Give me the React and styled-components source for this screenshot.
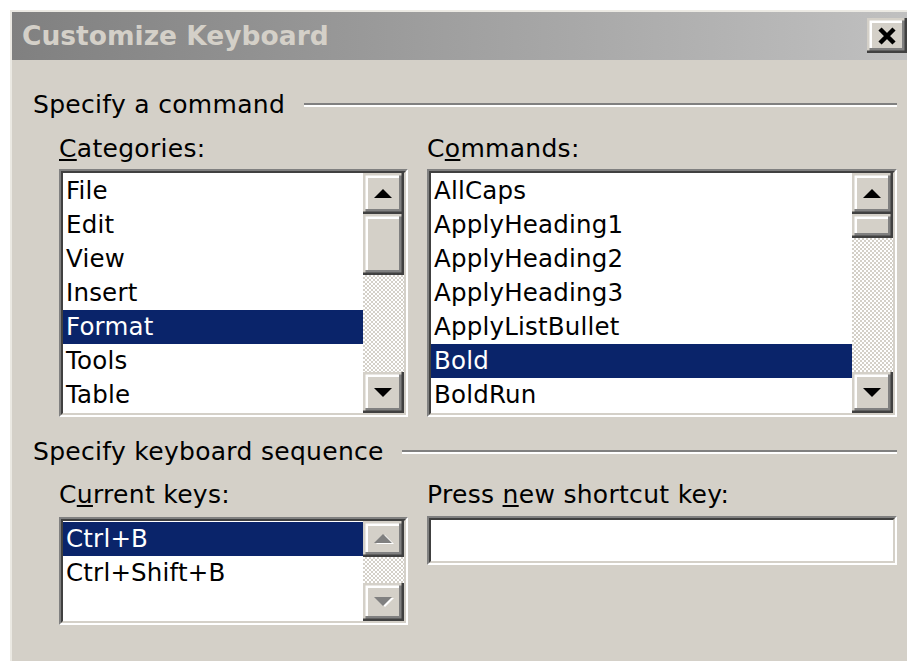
import React from 'react'
import styled, { createGlobalStyle } from 'styled-components'

const GlobalStyle = createGlobalStyle`
  html, body {
    margin: 0;
    padding: 0;
    background: #fff;
    overflow: hidden;
  }
  body {
    font-family: "DejaVu Sans", Tahoma, Verdana, sans-serif;
    color: #000;
  }
`

const face = '#d4d0c8'

// classic 3D edges, drawn as stacked inset shadows
const raised = `
  box-shadow:
    inset -2.5px -2.5px 0 #404040,
    inset 2.5px 2.5px 0 ${face},
    inset -5px -5px 0 #808080,
    inset 5px 5px 0 #fff;
`

const Dialog = styled.div`
  margin: 10px 0 0 10px;
  height: 651px;
  box-sizing: border-box;
  background: ${face};
  border-top: 2px solid #ebe9e3;
  border-left: 2px solid #ebe9e3;
`

const TitleBar = styled.div`
  display: flex;
  align-items: flex-start;
  height: 48px;
  padding-left: 10px;
  background: linear-gradient(to right, #808080, #c0c0c0);
`

const Title = styled.div`
  flex: 1;
  font-weight: bold;
  font-size: 26.5px;
  line-height: 48px;
  color: ${face};
`

const CloseButton = styled.div`
  width: 40px;
  height: 35px;
  margin-top: 6px;
  display: flex;
  align-items: center;
  justify-content: center;
  background: ${face};
  ${raised}
`

const Content = styled.div`
  width: 864px;
  padding: 30px 0 0 21px;
`

const GroupHeading = styled.div`
  display: flex;
  align-items: center;
  margin-top: ${(p) => p.$top || 0}px;
  font-size: 25px;
  letter-spacing: 0.3px;
  line-height: 30px;
  white-space: nowrap;
`

const Rule = styled.div`
  flex: 1;
  height: 0;
  margin-left: ${(p) => p.$gap}px;
  border-top: 2px solid #808080;
  border-bottom: 2px solid #fff;
`

const Columns = styled.div`
  display: flex;
  gap: 19px;
  padding-left: 26px;
  margin-top: ${(p) => p.$top}px;
`

const Field = styled.div`
  display: flex;
  flex-direction: column;
  width: ${(p) => p.$width}px;
`

const Label = styled.div`
  font-size: 25px;
  letter-spacing: 0.3px;
  line-height: 30px;
  margin-bottom: ${(p) => p.$gap}px;
`

const Sunken = styled.div`
  box-sizing: border-box;
  height: ${(p) => p.$height}px;
  border-style: solid;
  border-width: 2.5px;
  border-color: #808080 #fff #fff #808080;
  display: flex;
`

const SunkenInner = styled.div`
  flex: 1;
  display: flex;
  min-width: 0;
  border-style: solid;
  border-width: 2.5px;
  border-color: #404040 ${face} ${face} #404040;
  background: #fff;
  overflow: hidden;
`

const Items = styled.div`
  flex: 1;
  padding-top: 1px;
  overflow: hidden;
`

const Item = styled.div`
  height: 34px;
  line-height: 34px;
  padding-left: 3px;
  font-size: 24.5px;
  letter-spacing: 0.2px;
  white-space: nowrap;
  background: ${(p) => (p.$selected ? '#0a246a' : 'transparent')};
  color: ${(p) => (p.$selected ? '#fff' : '#000')};
`

const ScrollBar = styled.div`
  width: 41px;
  display: flex;
  flex-direction: column;
  flex-shrink: 0;
`

const ScrollButton = styled.div`
  height: ${(p) => p.$h}px;
  flex-shrink: 0;
  display: flex;
  align-items: center;
  justify-content: center;
  background: ${face};
  ${raised}
`

const Track = styled.div`
  flex: 1;
  background: repeating-conic-gradient(${face} 0 25%, #fff 0 50%) 0 0 / 4px 4px;
`

const Arrow = ({ down, disabled }) => (
  <svg width="22" height="12" viewBox="0 0 22 12">
    {disabled && (
      <polygon
        points={down ? '3,2 21,2 12,11' : '3,11 21,11 12,2'}
        fill="#fff"
      />
    )}
    <polygon
      points={down ? '1,1 19,1 10,10' : '1,10 19,10 10,1'}
      fill={disabled ? '#808080' : '#000'}
    />
  </svg>
)

const ListBox = ({ items, selected, height, thumb, disabled, upH = 41, downH = 41 }) => (
  <Sunken $height={height}>
    <SunkenInner>
      <Items>
        {items.map((it) => (
          <Item key={it} $selected={it === selected}>
            {it}
          </Item>
        ))}
      </Items>
      <ScrollBar>
        <ScrollButton $h={upH}>
          <Arrow disabled={disabled} />
        </ScrollButton>
        {thumb ? <ScrollButton $h={thumb} /> : null}
        <Track />
        <ScrollButton $h={downH}>
          <Arrow down disabled={disabled} />
        </ScrollButton>
      </ScrollBar>
    </SunkenInner>
  </Sunken>
)

const categories = ['File', 'Edit', 'View', 'Insert', 'Format', 'Tools', 'Table']
const commands = [
  'AllCaps',
  'ApplyHeading1',
  'ApplyHeading2',
  'ApplyHeading3',
  'ApplyListBullet',
  'Bold',
  'BoldRun',
]

const App = () => (
  <>
    <GlobalStyle />
    <Dialog>
      <TitleBar>
        <Title>Customize Keyboard</Title>
        <CloseButton>
          <svg width="20" height="18" viewBox="0 0 20 18">
            <path d="M3 2 L17 16 M17 2 L3 16" stroke="#000" strokeWidth="4.5" />
          </svg>
        </CloseButton>
      </TitleBar>

      <Content>
        <GroupHeading>
          Specify a command
          <Rule $gap={19} />
        </GroupHeading>
        <Columns $top={14}>
          <Field $width={349}>
            <Label $gap={5}>
              <u>C</u>ategories:
            </Label>
            <ListBox items={categories} selected="Format" height={248} thumb={61} />
          </Field>
          <Field $width={470}>
            <Label $gap={5}>
              C<u>o</u>mmands:
            </Label>
            <ListBox items={commands} selected="Bold" height={248} thumb={24} />
          </Field>
        </Columns>

        <GroupHeading $top={20}>
          Specify keyboard sequence
          <Rule $gap={18} />
        </GroupHeading>
        <Columns $top={13}>
          <Field $width={349}>
            <Label $gap={7}>
              C<u>u</u>rrent keys:
            </Label>
            <ListBox
              items={['Ctrl+B', 'Ctrl+Shift+B']}
              selected="Ctrl+B"
              height={108}
              disabled
              upH={36}
              downH={38}
            />
          </Field>
          <Field $width={470}>
            <Label $gap={6}>
              Press <u>n</u>ew shortcut key:
            </Label>
            <Sunken $height={49}>
              <SunkenInner />
            </Sunken>
          </Field>
        </Columns>
      </Content>
    </Dialog>
  </>
)

export default App
